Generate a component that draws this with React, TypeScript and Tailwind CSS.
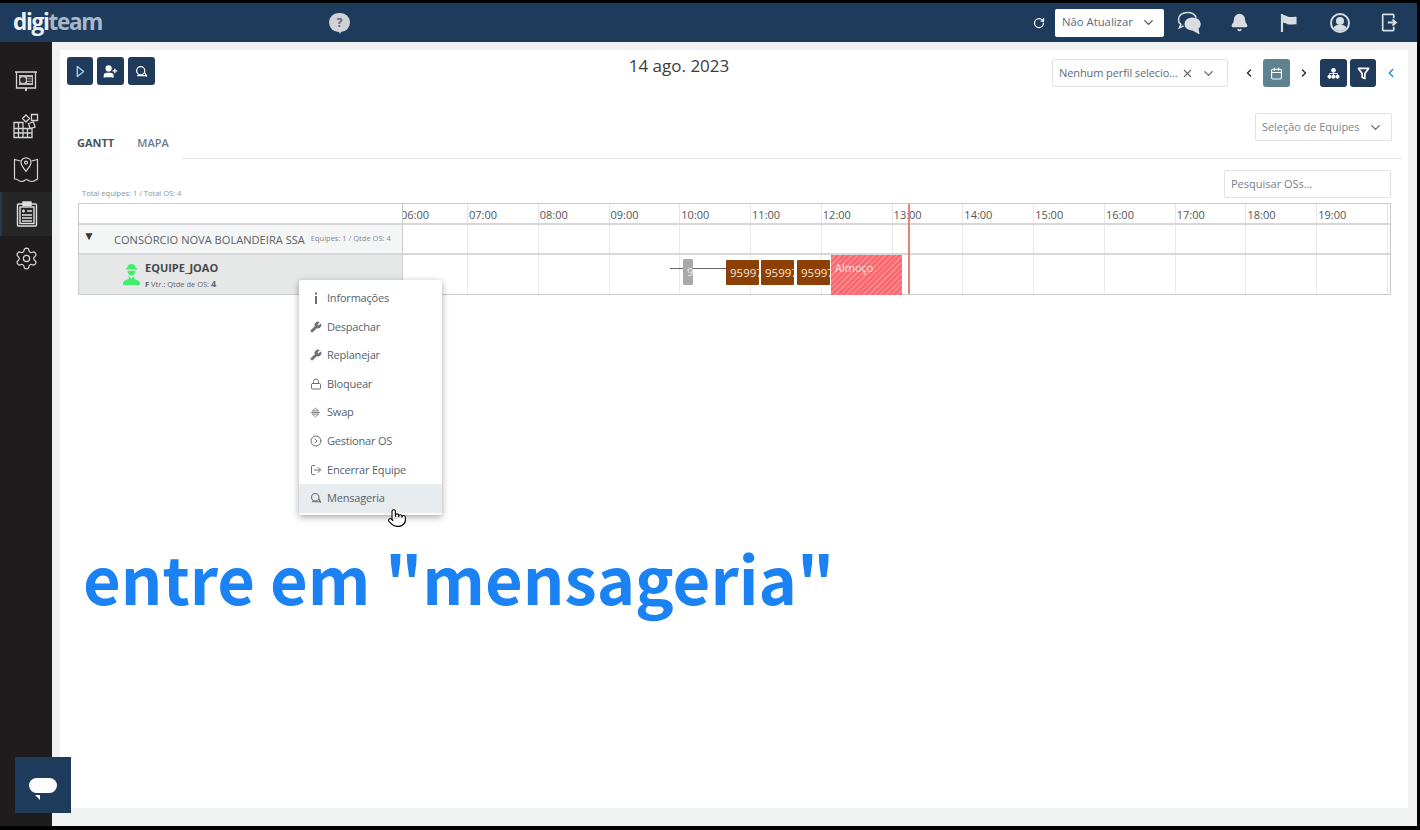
import {
  Bell,
  Calendar,
  ChevronDown,
  ChevronLeft,
  ChevronRight,
  CircleChevronRight,
  Lock,
  LogOut,
  Pointer,
  RotateCw,
  Settings,
  UserPlus,
  Wrench,
  X,
} from "lucide-react";
import type { ReactNode } from "react";

const HOURS = ["07:00", "08:00", "09:00", "10:00", "11:00", "12:00", "13:00", "14:00", "15:00", "16:00", "17:00", "18:00", "19:00"];

function ChatPair({ className }: { className?: string }) {
  return (
    <svg viewBox="0 0 26 24" className={className} fill="none" stroke="currentColor" strokeWidth="1.6">
      <path d="M11 1.500C5.500 1.500 1.500 4.500 1.500 9c0 2 1 3.700 2.500 5l-1.500 3.500 4.500-2" />
      <path d="M11 1.500c5 0 8 2.500 9 5.500" />
      <path d="M16 7.500c-4.500 0-7.500 2.500-7.500 6s3.500 6 7.500 6l6.500 3.500-1-5c1.500-1 2.500-2.700 2.500-4.500 0-3.500-3.500-6-8-6z" fill="currentColor" />
    </svg>
  );
}

function SmallChat({ className }: { className?: string }) {
  return (
    <svg viewBox="0 0 16 16" className={className} fill="none" stroke="currentColor" strokeWidth="1.500">
      <circle cx="7" cy="7" r="5" />
      <path d="M2.500 13h9.500c1 0 2 .5 2.500 1L12 9.500" />
    </svg>
  );
}

function SwapIcon({ className }: { className?: string }) {
  return (
    <svg viewBox="0 0 14 14" className={className} fill="none" stroke="currentColor" strokeWidth="1.100">
      <path d="M3 5l4-3.500L11 5zM3 9l4 3.500L11 9z" />
      <path d="M1.500 7h11" />
    </svg>
  );
}

function DashboardIcon() {
  return (
    <svg viewBox="0 0 24 24" className="h-[24px] w-[24px]" fill="none" stroke="#d4d4d4" strokeWidth="1.300">
      <path d="M1 2h22M2.500 2v16h19V2" />
      <path d="M12 18v3" strokeWidth="2" />
      <rect x="5" y="5" width="14" height="10" fill="#bdbdbd" stroke="none" />
      <circle cx="9" cy="10" r="2.200" stroke="#222" fill="#333" />
      <path d="M13 7.800h5M13 10h5M13 12.300h5" stroke="#222" />
    </svg>
  );
}

function BlocksIcon() {
  return (
    <svg viewBox="0 0 26 26" className="h-[26px] w-[26px]" fill="none" stroke="#d4d4d4" strokeWidth="1.300">
      <path d="M1 9.500h9v6h9v9H1zM1 15.500h9v9M1 20h18M5.500 9.500v15M14.500 15.500v9" />
      <path d="M9.500 5.500L13 2l3.500 3.500L13 9zM18.500 1.500h6v6h-6zM15.500 10.500l5-1.500 1.500 5-5 1.500z" />
    </svg>
  );
}

function MapPinIcon() {
  return (
    <svg viewBox="0 0 26 26" className="h-[26px] w-[26px]" fill="none" stroke="#d4d4d4" strokeWidth="1.200">
      <path d="M7.500 4L1.500 2.500v19.500c4 0 4 2.500 7 2.500s4-2 5-2 3 2 5.500 2 4-1.500 5.500-2.500V2.500L18.500 4" />
      <path d="M13 .8c3 0 5 2.200 5 4.800 0 3-3 6-5 8.700-2-2.700-5-5.700-5-8.700C8 3 10 .8 13 .8z" />
      <circle cx="13" cy="5.600" r="1.500" />
    </svg>
  );
}

function ClipboardIcon() {
  return (
    <svg viewBox="0 0 24 26" className="h-[26px] w-[24px]" fill="none" stroke="#e0e0e0" strokeWidth="1.400">
      <rect x="2.500" y="3" width="19" height="22" rx="1" />
      <rect x="5" y="6" width="14" height="16.500" />
      <rect x="8" y="1" width="8" height="3.500" fill="#e0e0e0" />
      <path d="M7 10h3M8.500 8.500v3M12 10h5M7 14h10M7 17h10M7 20h10" />
    </svg>
  );
}

function WorkerIcon() {
  return (
    <svg viewBox="0 0 20 24" className="h-[23px] w-[19px]" fill="#3df06a">
      <path d="M10 1c2.800 0 4.500 2 4.500 4.500H16v1.300H4V5.500h1.500C5.500 3 7.200 1 10 1z" />
      <path d="M5.800 8h8.400c0 2.800-1.800 5-4.200 5S5.800 10.800 5.800 8z" />
      <path d="M7 13.500l3 3 3-3v3.500c3 .5 6 2 6 5v1H1v-1c0-3 3-4.500 6-5z" />
    </svg>
  );
}

function WavyFlag({ className }: { className?: string }) {
  return (
    <svg viewBox="0 0 20 22" className={className} fill="currentColor">
      <rect x="1" y="1" width="2.400" height="20" />
      <path d="M3.400 2c3 0 3.500 1.800 7 2.200 2.500.3 5-.5 8-.2v8.500c-3-.3-5 .5-8 .2-3-.3-4-2-7-2z" />
    </svg>
  );
}

function BoxExit({ className }: { className?: string }) {
  return (
    <svg viewBox="0 0 20 22" className={className} fill="none" stroke="currentColor" strokeWidth="2">
      <path d="M15 6V2.500a1 1 0 0 0-1-1H3a1 1 0 0 0-1 1v17a1 1 0 0 0 1 1h11a1 1 0 0 0 1-1V16" />
      <path d="M8 11h9M13.500 7.500L17.500 11l-4 3.500" strokeWidth="2.200" />
    </svg>
  );
}

function TreeIcon({ className }: { className?: string }) {
  return (
    <svg viewBox="0 0 14 14" className={className} fill="currentColor">
      <circle cx="7" cy="3.500" r="2.500" />
      <circle cx="2.700" cy="10.500" r="2.200" />
      <circle cx="7" cy="10.500" r="2.200" />
      <circle cx="11.300" cy="10.500" r="2.200" />
      <path d="M2.700 9V7h8.600v2M7 5v4" fill="none" stroke="currentColor" strokeWidth="1" />
    </svg>
  );
}

function FunnelThick({ className }: { className?: string }) {
  return (
    <svg viewBox="0 0 14 14" className={className} fill="none" stroke="currentColor" strokeWidth="1.800">
      <path d="M1.500 1.500h11L8.500 7v5.500l-3-1.500V7z" strokeLinejoin="round" />
    </svg>
  );
}

function PlayOutline({ className }: { className?: string }) {
  return (
    <svg viewBox="0 0 10 14" className={className} fill="none" stroke="currentColor" strokeWidth="1.600">
      <path d="M1.500 1.500L8.500 7l-7 5.500z" strokeLinejoin="round" />
    </svg>
  );
}

function LetterI({ className }: { className?: string }) {
  return (
    <svg viewBox="0 0 4 12" className={className} fill="currentColor">
      <rect x="1" y="0.500" width="2" height="2" />
      <rect x="1" y="4" width="2" height="8" />
    </svg>
  );
}

function NavItem({ active, children }: { active?: boolean; children: ReactNode }) {
  return (
    <div className={`flex h-[44px] items-center justify-center ${active ? "border-l-2 border-[#26384c] bg-[#262626]" : ""}`}>
      {children}
    </div>
  );
}

function DarkButton({ children, w = "w-[27px]" }: { children: ReactNode; w?: string }) {
  return (
    <div className={`flex h-[28px] ${w} items-center justify-center rounded-[3px] bg-[#1f3a5a] text-white`}>
      {children}
    </div>
  );
}

function MenuItem({ icon, label, active }: { icon: ReactNode; label: string; active?: boolean }) {
  return (
    <div className={`flex h-[28.600px] items-center ${active ? "bg-[#e9ecee]" : ""}`}>
      <span className="flex w-[28px] justify-center pl-[5px] text-[#6b6f73]">{icon}</span>
      <span className="text-[11px] tracking-[-0.2px] text-[#56636e]">{label}</span>
    </div>
  );
}

function OsBar({ left }: { left: string }) {
  return (
    <div className={`absolute top-[5px] h-[25px] w-[33px] overflow-hidden rounded-[1px] bg-[#8c4005] pl-[4px] text-[11.500px] leading-[25px] text-[#f4e6d8] ${left}`}>
      95997
    </div>
  );
}

export default function App() {
  return (
    <div
      className="relative flex h-[830px] w-[1420px] flex-col overflow-hidden bg-black pb-[4px] pr-[3px] pt-[3px]"
      style={{ fontFamily: '"Open Sans", "Noto Sans", sans-serif' }}
    >
      {/* top bar */}
      <header className="flex h-[39px] shrink-0 items-center bg-[#1f3b5c] pl-[13px]">
        <div className="w-[316px] text-[22.500px] font-bold leading-none tracking-[-1.300px]">
          <span className="text-[#eef1f4]">digi</span>
          <span className="text-[#a9b8c6]">team</span>
        </div>
        <div className="relative flex h-[19px] w-[21px] items-center justify-center rounded-full bg-[#cfd3d6] text-[12px] font-bold text-[#5e6a75]">
          ?
          <div className="absolute left-[8px] top-[15px] h-0 w-0 border-l-[3px] border-r-[3px] border-t-[6px] border-l-transparent border-r-transparent border-t-[#cfd3d6]" />
        </div>
        <div className="ml-auto flex items-center text-[#d8dde2]">
          <RotateCw className="mr-[10px] h-[12px] w-[12px] text-white" strokeWidth={2.500} />
          <div className="flex h-[28px] w-[109px] items-center justify-between rounded-[2px] bg-white pl-[7px] pr-[8px] text-[11.300px] text-[#5d6b78]">
            Não Atualizar
            <ChevronDown className="h-[15px] w-[15px] text-[#555]" />
          </div>
          <ChatPair className="ml-[13px] h-[23px] w-[25px]" />
          <Bell className="ml-[28px] h-[19px] w-[19px]" fill="currentColor" />
          <WavyFlag className="ml-[31px] h-[20px] w-[18px]" />
          <div className="relative ml-[32px] flex h-[20px] w-[20px] items-center justify-center overflow-hidden rounded-full border-2 border-[#d8dde2]">
            <div className="absolute left-[4px] top-[2px] h-[8px] w-[8px] rounded-full bg-[#d8dde2]" />
            <div className="absolute left-[1px] top-[10px] h-[10px] w-[14px] rounded-full bg-[#d8dde2]" />
          </div>
          <BoxExit className="ml-[31px] mr-[19px] h-[19px] w-[17px]" />
        </div>
      </header>

      <div className="flex min-h-0 flex-1">
        {/* sidebar */}
        <nav className="w-[52px] shrink-0 bg-[#1e1c1c] pt-[18px]">
          <NavItem><DashboardIcon /></NavItem>
          <NavItem><BlocksIcon /></NavItem>
          <NavItem><MapPinIcon /></NavItem>
          <NavItem active><ClipboardIcon /></NavItem>
          <NavItem><Settings className="h-[25px] w-[25px] text-[#d4d4d4]" strokeWidth={1.200} /></NavItem>
        </nav>

        {/* content */}
        <main className="min-w-0 flex-1 bg-[#f0f1f1] pb-[18px] pl-[8px] pr-[9px] pt-[8px]">
          <div className="h-full bg-white">
            {/* toolbar */}
            <div className="grid h-[37px] grid-cols-[513px_198px_1fr] items-start pl-[7px] pr-[10px] pt-[7px]">
              <div className="flex gap-[4px]">
                <DarkButton w="w-[26px]"><PlayOutline className="h-[13px] w-[9px] text-[#9fd0ee]" /></DarkButton>
                <DarkButton><UserPlus className="h-[15px] w-[15px]" fill="currentColor" /></DarkButton>
                <DarkButton><SmallChat className="h-[13px] w-[13px]" /></DarkButton>
              </div>
              <div className="text-center text-[17px] leading-[18px] text-[#3c3c3c]">14 ago. 2023</div>
              <div className="flex items-center justify-end pt-[2px]">
                <div className="flex h-[28px] w-[176px] items-center rounded-[2px] border border-[#e0e3e5] pl-[6px] pr-[11px] text-[#5d6b78]">
                  <span className="flex-1 whitespace-nowrap text-[11px] tracking-[-0.1px]">Nenhum perfil selecio...</span>
                  <X className="mr-[7px] h-[13px] w-[13px] text-[#666]" />
                  <ChevronDown className="h-[15px] w-[15px] text-[#666]" />
                </div>
                <ChevronLeft className="ml-[15px] h-[12px] w-[12px] text-[#333]" strokeWidth={3} />
                <div className="ml-[8px] flex h-[28px] w-[27px] items-center justify-center rounded-[3px] bg-[#5e8290] text-white">
                  <Calendar className="h-[13px] w-[13px]" />
                </div>
                <ChevronRight className="ml-[8px] h-[12px] w-[12px] text-[#333]" strokeWidth={3} />
                <div className="ml-[10px] flex gap-[3px]">
                  <DarkButton><TreeIcon className="h-[13px] w-[13px]" /></DarkButton>
                  <DarkButton w="w-[26px]"><FunnelThick className="h-[13px] w-[13px]" /></DarkButton>
                </div>
                <ChevronLeft className="ml-[8px] h-[14px] w-[14px] text-[#2b8fc4]" strokeWidth={2.500} />
              </div>
            </div>

            {/* tabs */}
            <div className="ml-[17px] mr-[6px] flex h-[72px] items-end">
              <div className="flex w-[105px] gap-[23px] pb-[9px] text-[11px] font-bold leading-[15px]">
                <span className="text-[#48535c]">GANTT</span>
                <span className="font-semibold text-[#6e7c88]">MAPA</span>
              </div>
              <div className="flex h-[46px] flex-1 items-start justify-end border-b border-[#e3e5e6] pr-[10px]">
                <div className="flex h-[28px] w-[137px] items-center justify-between rounded-[2px] border border-[#e0e3e5] pl-[6px] pr-[8px] text-[11px] tracking-[-0.05px] text-[#7d858c]">
                  Seleção de Equipes
                  <ChevronDown className="h-[15px] w-[15px] text-[#666]" />
                </div>
              </div>
            </div>

            {/* search and totals */}
            <div className="ml-[22px] mr-[17px] mt-[11px] flex h-[28px] items-end justify-between">
              <span className="text-[7.500px] leading-[10px] text-[#8b949b]">Total equipes: 1 / Total OS: 4</span>
              <div className="flex h-[28px] w-[167px] items-center rounded-[2px] border border-[#e0e3e5] pl-[6px] text-[11px] text-[#76808a]">
                Pesquisar OSs...
              </div>
            </div>

            {/* gantt */}
            <div className="relative ml-[18px] mr-[18px] mt-[5px] w-[1313px] border border-[#c9cbcc]">
              <div className="flex h-[21px] border-b-2 border-[#d5d7d8]">
                <div className="w-[324px] shrink-0 border-r border-[#c9cbcc]" />
                <div className="w-[65px] shrink-0 overflow-hidden border-r border-[#e6e7e8] text-[11px] leading-[22px] text-[#555]">
                  <span className="-ml-[2px]">06:00</span>
                </div>
                {HOURS.map((h) => (
                  <div key={h} className="w-[70.770px] shrink-0 border-r border-[#e6e7e8] pl-[1px] text-[11px] leading-[22px] text-[#555]">
                    {h}
                  </div>
                ))}
              </div>
              <div className="flex h-[30px] border-b-2 border-[#d5d7d8]">
                <div className="flex w-[324px] shrink-0 items-center border-r border-[#c9cbcc] bg-[#f4f5f5] pl-[4px]">
                  <span className="mb-[6px] w-[31px] text-[12px] text-[#3a3a3a]">▼</span>
                  <span className="mt-[2px] text-[11.100px] text-[#5a6268]">CONSÓRCIO NOVA BOLANDEIRA SSA</span>
                  <span className="ml-[6px] text-[7.500px] text-[#7e8b96]">Equipes: 1 / Qtde OS: 4</span>
                </div>
                <div className="w-[65px] shrink-0 border-r border-[#e9eaeb]" />
                {HOURS.map((h) => (
                  <div key={h} className="w-[70.770px] shrink-0 border-r border-[#e9eaeb]" />
                ))}
              </div>
              <div className="flex h-[39px]">
                <div className="flex w-[324px] shrink-0 items-center border-r border-[#c9cbcc] bg-[#e6e7e7] pl-[43px]">
                  <WorkerIcon />
                  <div className="ml-[4px] pt-[1px]">
                    <div className="text-[11px] font-bold leading-[17px] text-[#44494e]">EQUIPE_JOAO</div>
                    <div className="pt-[1px] text-[7.500px] leading-[13px] text-[#5d656c]">
                      <b>F</b> Vtr.: Qtde de OS: <b className="text-[9px]">4</b>
                    </div>
                  </div>
                </div>
                <div className="relative flex flex-1">
                  <div className="w-[65px] shrink-0 border-r border-[#e9eaeb]" />
                  {HOURS.map((h) => (
                    <div key={h} className="w-[70.770px] shrink-0 border-r border-[#e9eaeb]" />
                  ))}
                  <div className="absolute left-[267px] top-[13px] h-px w-[56px] bg-[#666]" />
                  <div className="absolute left-[280px] top-[4px] h-[26px] w-[10px] overflow-hidden rounded-[1px] bg-[#aaaaaa] pl-[4px] text-[11px] leading-[26px] text-[#eee]">9</div>
                  <OsBar left="left-[323px]" />
                  <OsBar left="left-[358px]" />
                  <OsBar left="left-[394px]" />
                  <div className="absolute left-[428px] top-0 h-[40px] w-[71px] bg-[repeating-linear-gradient(135deg,#f9666e_0,#f9666e_2px,#fb858b_2px,#fb858b_4px)] pl-[4px] text-[11px] leading-[25px] text-[#fde0e0]">
                    Almoço
                  </div>
                </div>
              </div>
              <div className="absolute bottom-0 left-[829px] top-0 w-[2px] bg-[#e8817a]" />
            </div>
          </div>
        </main>
      </div>

      {/* context menu */}
      <div className="absolute left-[299px] top-[280px] h-[235px] w-[143px] rounded-[2px] bg-white pt-[4px] shadow-[0_2px_7px_rgba(0,0,0,0.35)]">
        <MenuItem icon={<LetterI className="h-[12px] w-[4px]" />} label="Informações" />
        <MenuItem icon={<Wrench className="h-[12px] w-[12px]" fill="currentColor" />} label="Despachar" />
        <MenuItem icon={<Wrench className="h-[12px] w-[12px]" fill="currentColor" />} label="Replanejar" />
        <MenuItem icon={<Lock className="h-[12px] w-[12px]" />} label="Bloquear" />
        <MenuItem icon={<SwapIcon className="h-[11px] w-[11px]" />} label="Swap" />
        <MenuItem icon={<CircleChevronRight className="h-[12px] w-[12px]" />} label="Gestionar OS" />
        <MenuItem icon={<LogOut className="h-[12px] w-[12px]" />} label="Encerrar Equipe" />
        <MenuItem icon={<SmallChat className="h-[12px] w-[12px]" />} label="Mensageria" active />
      </div>
      <Pointer className="absolute left-[387px] top-[506px] h-[24px] w-[20px] fill-white text-black" strokeWidth={1.300} />

      {/* caption */}
      <div className="absolute left-[83px] top-[534px] whitespace-nowrap text-[65px] font-semibold leading-[86px] text-[#1a82f2]" style={{ fontFamily: '"Noto Sans CJK SC", "Noto Sans", sans-serif' }}>
        entre em "mensageria"
      </div>

      {/* chat launcher */}
      <div className="absolute left-[15px] top-[757px] flex h-[56px] w-[56px] items-center justify-center bg-[#1f3b5c]">
        <div className="relative h-[15px] w-[28px] rounded-[8px] bg-white">
          <div className="absolute left-[6px] top-[17px] h-0 w-0 border-l-[5px] border-t-[5px] border-l-transparent border-t-white" />
        </div>
      </div>
    </div>
  );
}
